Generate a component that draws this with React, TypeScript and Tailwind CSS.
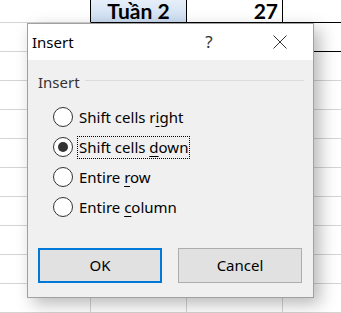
import React from "react";

const uiFont = { fontFamily: '"Noto Sans", "Open Sans", sans-serif' };

const Row = ({ first, children }: { first?: boolean; children?: React.ReactNode }) => (
  <div className={`flex ${first ? "h-[23px]" : "h-[29px]"}`}>{children}</div>
);

const Radio = ({
  label,
  checked,
  focused,
}: {
  label: React.ReactNode;
  checked?: boolean;
  focused?: boolean;
}) => (
  <div className="flex h-[30px] items-center">
    <div className="flex h-[20px] w-[20px] items-center justify-center rounded-full border border-[#333333] bg-white">
      {checked && <div className="h-[10px] w-[10px] rounded-full bg-[#333333]" />}
    </div>
    <span
      className={`ml-[4px] border px-[1px] leading-[21px] ${
        focused ? "border-dotted border-black" : "border-transparent"
      }`}
    >
      {label}
    </span>
  </div>
);

const U = ({ children }: { children: React.ReactNode }) => (
  <span className="underline decoration-1 underline-offset-[3px]">{children}</span>
);

export default function App() {
  return (
    <div className="relative h-[313px] w-[341px] overflow-hidden bg-white">
      {/* sheet grid */}
      <div style={{ fontFamily: 'Lato, "Liberation Sans", sans-serif' }}>
        <Row first>
          <div className="w-[91px] border-r border-b border-r-black border-b-[#d4d4d4]" />
          <div className="flex w-[96px] items-end justify-center border-r border-b border-black bg-gradient-to-b from-[#e6eff9] to-[#cbdcf1] pb-[1px] text-[21px] font-bold leading-none text-black">
            Tuần 2
          </div>
          <div className="flex w-[96px] items-end justify-end border-r border-b border-black pr-[4px] pb-[1px] text-[21px] font-bold leading-none text-black">
            27
          </div>
          <div className="flex-1 border-b border-black" />
        </Row>
        <Row>
          <div className="w-[91px] border-r border-b border-[#d4d4d4]" />
          <div className="w-[96px] border-r border-b border-black" />
          <div className="w-[96px] border-r border-b border-black" />
          <div className="flex-1 border-b border-black" />
        </Row>
        {Array.from({ length: 9 }).map((_, i) => (
          <Row key={i}>
            <div className="w-[91px] border-r border-b border-[#d4d4d4]" />
            <div className="w-[96px] border-r border-b border-[#d4d4d4]" />
            <div className="w-[96px] border-r border-b border-[#d4d4d4]" />
            <div className="flex-1 border-b border-[#d4d4d4]" />
          </Row>
        ))}
      </div>

      {/* Insert dialog */}
      <div
        className="absolute left-[27px] top-[23px] flex h-[275px] w-[287px] flex-col border border-[#a0a0a0] bg-[#f0f0f0] text-[15px] text-black shadow-[6px_6px_16px_rgba(0,0,0,0.28)]"
        style={uiFont}
      >
        <div className="flex h-[36px] items-center bg-white pl-[4px]">
          <span>Insert</span>
          <span className="ml-auto w-[20px] text-center text-[17px] text-[#333]">?</span>
          <svg className="ml-[54px] mr-[26px]" width="14" height="14" viewBox="0 0 14 14">
            <path d="M0.5 0.5L13.5 13.5M13.5 0.5L0.5 13.5" stroke="#333" strokeWidth="1" fill="none" />
          </svg>
        </div>

        <div className="flex flex-1 flex-col pl-[10px] pr-[9px] pt-[12px]">
          <div className="flex h-[20px] items-center">
            <span className="text-[#333]">Insert</span>
            <div className="ml-[5px] mt-[-3px] h-px flex-1 bg-[#dcdcdc]" />
          </div>

          <div className="ml-[15px] mt-[10px] flex flex-col">
            <Radio label={<>Shift cells r<U>i</U>ght</>} />
            <Radio label={<>Shift cells <U>d</U>own</>} checked focused />
            <Radio label={<>Entire <U>r</U>ow</>} />
            <Radio label={<>Entire <U>c</U>olumn</>} />
          </div>

          <div className="mt-[26px] flex gap-[16px]">
            <button
              type="button"
              className="h-[35px] w-[124px] border-2 border-[#0078d7] bg-[#e1e1e1]"
            >
              OK
            </button>
            <button
              type="button"
              className="h-[35px] w-[124px] border border-[#adadad] bg-[#e1e1e1]"
            >
              Cancel
            </button>
          </div>
        </div>
      </div>
    </div>
  );
}
